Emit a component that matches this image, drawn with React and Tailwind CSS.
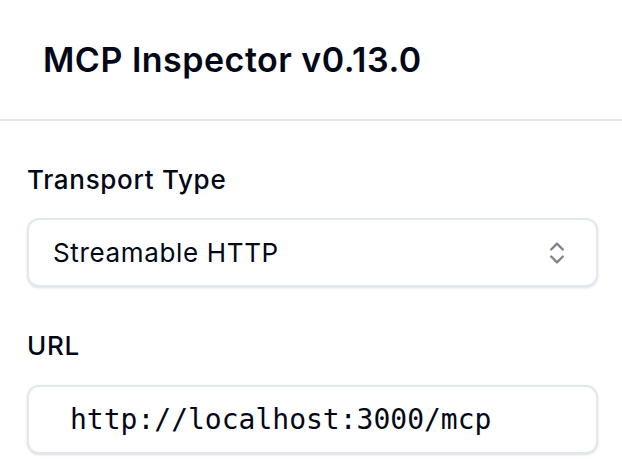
import { ChevronsUpDown } from "lucide-react";

export default function App() {
  return (
    <div className="min-h-[474px] w-[622px] bg-white font-['Inter',sans-serif] text-[#020817]">
      <header className="flex h-[121px] items-center border-b-2 border-[#e5e7eb] px-[43px]">
        <h1 className="text-[34px] leading-none font-semibold tracking-[0.5px]">MCP Inspector v0.13.0</h1>
      </header>
      <div className="pr-[24px] pl-[27px]">
        <div className="pt-[41px]">
          <label className="block text-[26px] leading-[36px] font-medium tracking-[0.7px]">Transport Type</label>
          <button className="mt-[20px] flex h-[69px] w-full items-center justify-between rounded-[12px] border-2 border-[#e2e8f0] bg-white pr-[25px] pl-[24px] text-[26px] tracking-[0.65px] shadow-sm">
            <span>Streamable HTTP</span>
            <ChevronsUpDown className="h-[28px] w-[28px] text-[#020817] opacity-50" strokeWidth={2} />
          </button>
        </div>
        <div className="pt-[41px]">
          <label className="block text-[26px] leading-[36px] font-medium tracking-[0.7px]">URL</label>
          <div className="mt-[21px] flex h-[69px] w-full items-center rounded-[12px] border-2 border-[#e2e8f0] bg-white px-[41px] shadow-sm">
            <span className="font-['DejaVu_Sans_Mono',monospace] text-[28px]">http://localhost:3000/mcp</span>
          </div>
        </div>
      </div>
    </div>
  );
}
